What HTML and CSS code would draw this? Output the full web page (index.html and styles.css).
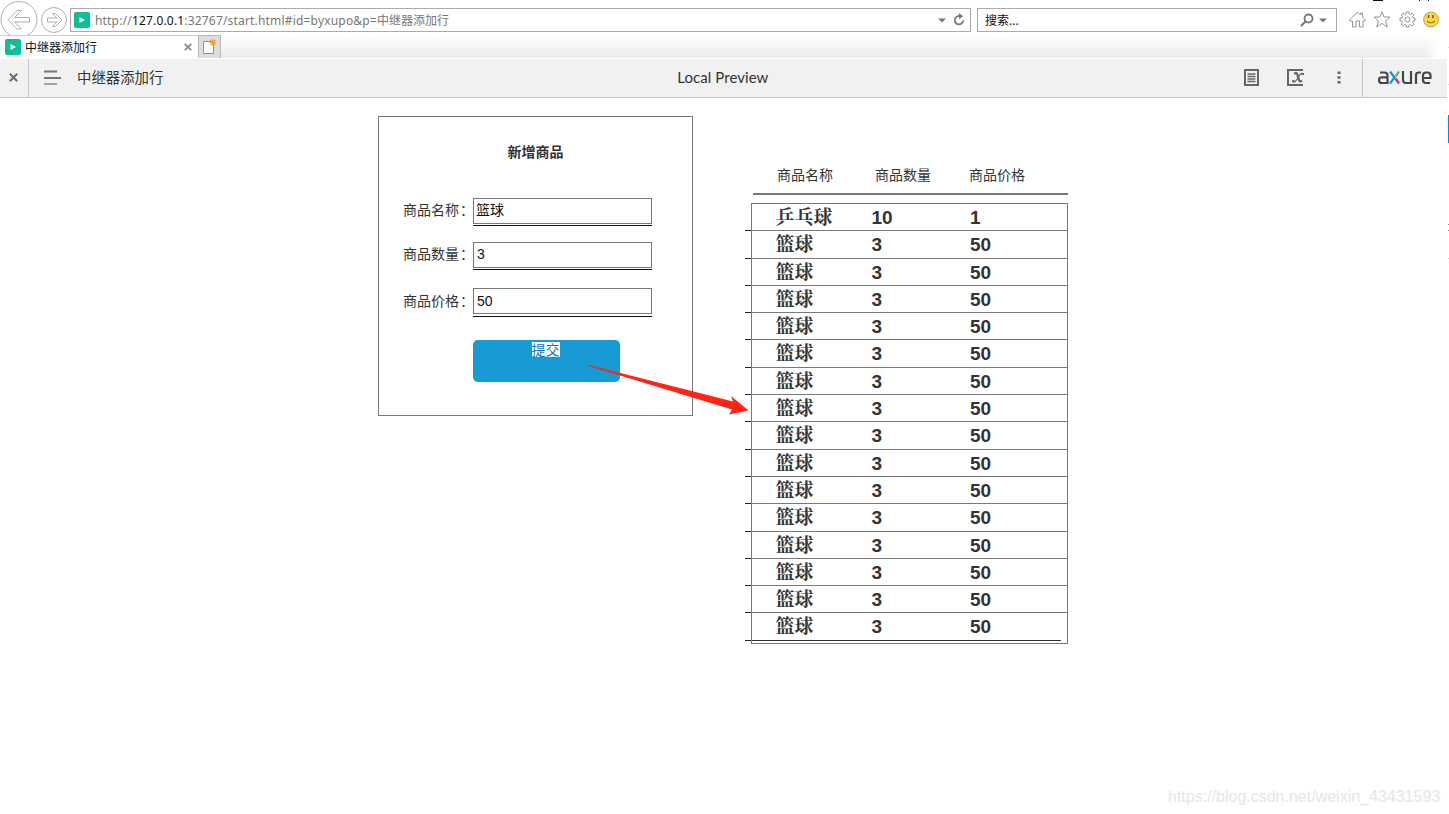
FILE: index.html
```html
<!DOCTYPE html>
<html lang="zh-CN">
<head>
<meta charset="utf-8">
<title>中继器添加行</title>
<link rel="stylesheet" href="styles.css">
</head>
<body>
<header class="nav">
  <svg class="nav-back" width="38" height="36" viewBox="0 0 38 36" fill="none" stroke="#b0b0b0"><circle cx="19" cy="19.5" r="18"/><path d="M8 19.800 17 10.500H21.500L14.500 17.500H29.500V22H14.500L21.500 29H17Z"/></svg>
  <svg class="nav-forward" width="27" height="36" viewBox="0 0 27 36" fill="none" stroke="#b0b0b0"><circle cx="13" cy="20" r="12.5"/><path d="M21 20 14.500 13.500H11.500L16 18H6.500V22H16L11.500 26.500H14.500Z"/></svg>
  <div class="address">
    <svg width="16" height="16" viewBox="0 0 16 16"><rect width="16" height="16" rx="2" fill="#0abf96"/><path d="M5.500 5 11 8 5.500 11Z" fill="#fff"/></svg>
    <span class="url">http://<b>127.0.0.1</b>:32767/start.html#id=byxupo&amp;p=<span class="url-cn">中继器添加行</span></span>
    <svg class="caret" width="8" height="5" viewBox="0 0 8 5"><path d="M0 .5H8L4 4.500Z" fill="#777"/></svg>
    <svg class="reload" width="12" height="14" viewBox="0 0 12 14" fill="none" stroke="#777" stroke-width="1.800"><path d="M8 3.500A4.200 4.200 0 1 0 10.200 7.500"/><path d="M6 0 10 3.300 6 6.300Z" fill="#777" stroke="none"/></svg>
  </div>
  <div class="search">
    <span>搜索...</span>
    <svg width="14" height="14" viewBox="0 0 14 14" fill="none" stroke="#777"><circle cx="8.500" cy="5.500" r="4" stroke-width="1.800"/><path d="M5.500 8.500 1 13" stroke-width="2.200"/></svg>
    <svg class="search-caret" width="8" height="5" viewBox="0 0 8 5"><path d="M0 .5H8L4 4.500Z" fill="#777"/></svg>
  </div>
  <div class="tools">
    <svg width="17" height="17" viewBox="0 0 17 17" fill="none" stroke="#969696"><path d="M1 8.500 8.500 1 11.500 4V2H13.500V6L16 8.500V10H14V16H10.500V10H7V16H3.500V10H1Z"/></svg>
    <svg width="18" height="17" viewBox="0 0 18 17" fill="none" stroke="#969696"><path d="M9 .8 11 6H17L12.500 10 14.300 16 9 12.400 3.700 16 5.500 10 1 6H7Z"/></svg>
    <svg width="17" height="17" viewBox="0 0 17 17" fill="none" stroke="#969696"><path d="M7 1H10V3L11.500 3.500 13 2.100 15 4.100 13.500 5.600 14 7H16V10H14L13.500 11.500 15 13 13 15 11.500 13.500 10 14V16H7V14L5.500 13.500 4 15 2 13 3.500 11.500 3 10H1V7H3L3.500 5.500 2 4 4 2 5.500 3.500 7 3Z"/><circle cx="8.500" cy="8.500" r="2.500"/></svg>
    <svg width="16" height="17" viewBox="0 0 16 17"><circle cx="8" cy="8.500" r="7.400" fill="#ffd83d" stroke="#b59d55"/><path d="M5.500 4V7M10 4V7" stroke="#6b5a22" stroke-width="1.500"/><path d="M4 10Q8 13.500 12 10" fill="none" stroke="#917a31" stroke-width="1.200"/></svg>
  </div>
  <svg class="window-controls" width="60" height="3" viewBox="0 0 60 3"><path d="M3 0H13V1H3ZM49 0H50V1H49ZM58 0H59V1H58Z" fill="#111"/></svg>
</header>
<div class="tabs">
  <div class="tab">
    <svg width="16" height="16" viewBox="0 0 16 16"><rect width="16" height="16" rx="2" fill="#0abf96"/><path d="M5.500 5 11 8 5.500 11Z" fill="#fff"/></svg>
    <span>中继器添加行</span>
    <svg class="tab-close" width="8" height="8" viewBox="0 0 8 8"><path d="M.8.8 7.200 7.200M7.200.8.8 7.200" stroke="#8a8a8a" stroke-width="1.800"/></svg>
  </div>
  <div class="new-tab"><svg width="16" height="17" viewBox="0 0 16 17"><path d="M1.500 3.500H11.500V15.500H1.500Z" fill="#fcfcfc" stroke="#929292"/><path d="M11 1V8M7.500 4.500H14.500M8.500 2 13.500 7M13.500 2 8.500 7" stroke="#eba32b" stroke-width="1.200"/></svg></div>
</div>
<div class="toolbar">
  <div class="close"><svg width="9" height="9" viewBox="0 0 9 9"><path d="M.8.8 8.200 8.200M8.200.8.8 8.200" stroke="#6d6d6d" stroke-width="2"/></svg></div>
  <svg class="menu" width="18" height="15" viewBox="0 0 18 15" stroke="#777"><path d="M0 1.500H13M0 8H17" stroke-width="2"/><path d="M0 14H13" stroke-width="1.300"/></svg>
  <span class="page-name">中继器添加行</span>
  <span class="preview">Local Preview</span>
  <div class="actions">
    <svg width="15" height="17" viewBox="0 0 15 17" fill="none" stroke="#666"><path d="M1 1H14V16H1Z" stroke-width="2"/><path d="M3.500 5H11.500M3.500 7.500H11.500M3.500 10H11.500M3.500 12.500H11.500" stroke-width="1.300"/></svg>
    <svg width="18" height="17" viewBox="0 0 18 17" fill="none" stroke="#666"><path d="M15 2V1H1V16H15V15" stroke-width="2"/><path d="M7 4.800Q10 3 10.500 6L12 11Q12.700 13.500 15 11.500" stroke-width="2.300"/><path d="M16.500 5.300Q14 3 12 7L9.500 11Q7.500 14 5.500 12" stroke-width="1.300"/><path d="M14.500 5H17M5 12.300H7.500" stroke-width="2"/></svg>
    <svg width="4" height="13" viewBox="0 0 4 13" fill="#666"><path d="M.5.5H3.500V3H.5ZM.5 5.200H3.500V7.700H.5ZM.5 10H3.500V12.500H.5Z"/></svg>
  </div>
  <div class="brand">
    <svg width="54" height="17" viewBox="0 0 54 17" fill="none" stroke="#47474a" stroke-width="2.200"><path d="M2 3.500H6.500Q9.500 3.500 9.500 6.500V14H4Q1 14 1 11T4 8.300H9.500M25 2V11Q25 14 28 14H33V2M38 15V6Q38 3.500 41 3.500H43M52 14H48Q45 14 45 11V6.500Q45 3.500 48 3.500H49.500Q52.500 3.500 52.500 6.500V9H45"/><path d="M12 2.500 16.500 8.500 12 14.500" stroke="#009cd9"/><path d="M17.500 7.500 21 2.500" stroke="#6dba32"/><path d="M17.500 9.500 21 14.500" stroke="#e71982"/></svg>
  </div>
</div>
<main class="canvas">
  <section class="form">
    <h1>新增商品</h1>
    <div class="field"><label>商品名称<span class="colon">：</span></label><div class="entry"><div class="input chinese">篮球</div></div></div>
    <div class="field second"><label>商品数量<span class="colon">：</span></label><div class="entry"><div class="input">3</div></div></div>
    <div class="field third"><label>商品价格<span class="colon">：</span></label><div class="entry"><div class="input">50</div></div></div>
    <div class="submit"><span>提交</span></div>
  </section>
  <section class="goods">
    <div class="head"><span>商品名称</span><span>商品数量</span><span>商品价格</span></div>
    <div class="rows" id="rows"></div>
  </section>
  <svg class="arrow" width="164" height="54" viewBox="0 0 164 54"><path d="M1 2.500Q0 1 3 2L147 38.500 145 33 162.500 47.500 143 51.500 146 46.500Z" fill="#ff2414"/></svg>
  <div class="side-marks"><i class="mark-blue"></i><i class="mark-dot"></i><i class="mark-dot low"></i><i class="mark-pale"></i></div>
  <div class="watermark">https://blog.csdn.net/weixin_43431593</div>
</main>
<script src="rows.js"></script>
</body>
</html>
```
FILE: rows.js
```js
const goods = [["乒乓球", 10, 1]];
for (let i = 0; i < 15; i++) goods.push(["篮球", 3, 50]);
const list = document.getElementById("rows");
for (const item of goods) {
  const row = document.createElement("div");
  row.className = "row";
  for (const value of item) {
    const cell = document.createElement("span");
    cell.textContent = value;
    row.append(cell);
  }
  list.append(row);
}
```
FILE: styles.css
```css
* { box-sizing: border-box; }
body { margin: 0; width: 1449px; height: 814px; overflow: hidden; position: relative; background: #fff; color: #333; font-family: "Liberation Sans", "Noto Sans CJK SC", sans-serif; }
svg { display: block; flex: none; }
.nav { height: 35px; display: flex; align-items: flex-start; font: 12px/22px "Noto Sans", "Noto Sans CJK SC", sans-serif; }
.nav-forward { margin-left: 3px; }
.address { margin: 8px 0 0 2px; width: 901px; height: 24px; border: 1px solid #ababab; display: flex; align-items: center; padding: 0 5px 0 3px; }
.url { margin-left: 5px; padding-top: 1px; color: #777; white-space: nowrap; letter-spacing: .18px; }
.url b { font-weight: 400; color: #111; }
.url-cn { letter-spacing: 0; }
.caret { margin-left: auto; }
.reload { margin-left: 7px; }
.search { margin: 8px 0 0 6px; width: 360px; height: 24px; border: 1px solid #ababab; display: flex; align-items: center; padding: 0 9px 0 7px; color: #111; }
.search span { padding-top: 1px; }
.search svg { margin-left: auto; }
.search .search-caret { margin-left: 5px; }
.tools { margin: 11px 0 0 12px; display: flex; gap: 7.3px; }
.window-controls { position: absolute; left: 1370px; top: 0; }
.tabs { height: 24px; display: flex; border-bottom: 1px solid #fff; background: linear-gradient(90deg, transparent 1425px, #fff 1440px), linear-gradient(#fff, #ececec); }
.tab { width: 198px; border-top: 1px solid #ccc; background: #fff; display: flex; align-items: center; padding: 0 6px 0 5px; font: 12px/22px "Noto Sans CJK SC", sans-serif; color: #111; }
.tab span { margin-left: 4px; }
.tab-close { margin-left: auto; }
.new-tab { width: 23px; border: 1px solid #b8b8b8; border-bottom: 0; background: #ddd; padding: 2px 0 0 3px; }
.toolbar { position: relative; width: 1447px; height: 39px; background: #f1f1f1; border-bottom: 1px solid #c6c6c6; display: flex; align-items: center; padding-bottom: 1px; }
.close { width: 29px; height: 38px; border-right: 1px solid #c9c9c9; display: flex; align-items: center; justify-content: center; padding-right: 1px; }
.menu { margin-left: 15px; }
.page-name { margin-left: 15px; padding-bottom: 1px; font: 400 14.4px/22px "Noto Sans CJK SC", sans-serif; }
.preview { width: 92px; margin-left: 514px; padding-bottom: 1px; font: 15px/20px Lato, "Open Sans", sans-serif; letter-spacing: .05px; white-space: nowrap; }
.actions { margin-left: auto; display: flex; align-items: center; gap: 28px; }
.actions svg:last-child { margin-left: 4px; }
.brand { width: 85px; height: 38px; margin-left: 21px; padding-left: 15px; border-left: 1px solid #c6c6c6; display: flex; align-items: center; }
.canvas { display: flex; align-items: flex-start; }
.form { margin: 18px 0 0 378px; width: 315px; height: 300px; border: 1px solid #797979; padding: 23px 0 0 25px; font-size: 14px; }
h1 { width: 263px; margin: 0; font: 700 14px/22px "Noto Sans CJK SC", sans-serif; text-align: center; }
.field { display: flex; margin-top: 36px; height: 28px; white-space: nowrap; }
.field.second { margin-top: 16px; }
.field.third { margin-top: 18px; }
.field label { width: 70px; margin-left: -1px; line-height: 23px; font-family: "Noto Sans CJK SC", sans-serif; font-weight: 400; }
.colon { margin-left: 1px; }
.entry { width: 179px; border-bottom: 1px solid #111; }
.third .entry { height: 29px; }
.input { height: 26px; border: 1px solid #797979; padding-left: 3px; line-height: 23px; color: #111; }
.third label, .third .input { line-height: 24px; }
.chinese { padding-left: 2px; line-height: 22px; }
.submit { margin: 24px 0 0 69px; width: 147px; height: 42px; border-radius: 5px; background: #169bd5; text-align: center; padding: 2px 2px 0 0; line-height: 15px; }
.submit span { display: inline-block; height: 15px; background: #fff; color: #0878c8; font: 400 14px/14px "Noto Sans CJK SC", sans-serif; }
.goods { margin: 66px 0 0 58px; width: 317px; }
.head { width: 315px; margin-left: 2px; height: 31px; border-bottom: 2px solid #777; display: grid; grid-template-columns: 98px 94px 1fr; padding-left: 24px; font: 400 14px/20px "Noto Sans CJK SC", sans-serif; }
.rows { margin-top: 8px; height: 441px; border: 1px solid #797979; }
.row { position: relative; height: 27.3px; border-bottom: 1px solid #797979; display: grid; grid-template-columns: 96px 98.500px 1fr; padding-left: 23.5px; font: 700 19px/27px "Liberation Sans", "Noto Serif CJK SC", "Noto Sans CJK SC", sans-serif; }
.row::before { content: ""; position: absolute; left: -7px; bottom: -1px; width: 6px; height: 1px; background: #222; }
.row:last-child { margin-right: 6px; border-color: #333; }
.arrow { position: absolute; left: 586px; top: 363px; }
.side-marks { position: absolute; left: 1448px; top: 38px; width: 1px; height: 222px; background: linear-gradient(transparent 0 9px, #ddd 9px 10px, transparent 10px 46px, #ddd 46px 47px, transparent 47px); }
.side-marks i { display: block; width: 1px; height: 1px; background: #888; }
.side-marks .mark-blue { margin-top: 77px; height: 28px; background: #0d87d8; }
.side-marks .mark-dot { margin-top: 81px; }
.side-marks .low { margin-top: 5px; }
.side-marks .mark-pale { margin-top: 27px; background: #ccc; }
.watermark { position: absolute; left: 1168px; top: 787px; font-size: 16px; line-height: 20px; color: #e6e6e6; white-space: nowrap; }
```
